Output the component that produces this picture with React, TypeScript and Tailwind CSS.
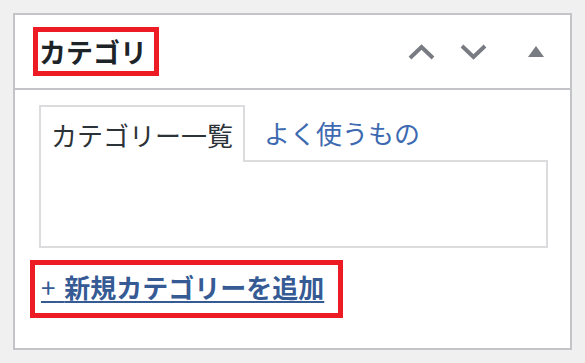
import React from 'react';

const jp = { fontFamily: '"Noto Sans CJK JP", "Noto Sans", sans-serif' };

const ChevronUp = () => (
  <svg width="27" height="16" viewBox="0 0 27 16">
    <path d="M2 14 L13.5 3 L25 14" fill="none" stroke="#787c82" strokeWidth="4" />
  </svg>
);

const ChevronDown = () => (
  <svg width="27" height="16" viewBox="0 0 27 16">
    <path d="M2 2 L13.5 13 L25 2" fill="none" stroke="#787c82" strokeWidth="4" />
  </svg>
);

const Triangle = () => (
  <svg width="16" height="11" viewBox="0 0 16 11">
    <polygon points="8,0 16,11 0,11" fill="#787c82" />
  </svg>
);

export default function App() {
  return (
    <div className="w-[585px] h-[363px] bg-[#f0f0f1] p-[13px]" style={jp}>
      <div className="h-[337px] border-2 border-[#c3c4c7] bg-white flex flex-col">
        <div className="h-[75px] border-b-2 border-[#c3c4c7] flex items-center pl-[18px] pr-[26px]">
          <div className="h-[49px] w-[126px] border-[5px] border-[#ed1c24] flex items-center pl-[1px]">
            <h2 className="text-[27px] font-bold text-[#1d2327] leading-none">カテゴリ</h2>
          </div>
          <div className="ml-auto flex items-center">
            <ChevronUp />
            <div className="ml-[25px]"><ChevronDown /></div>
            <div className="ml-[41px]"><Triangle /></div>
          </div>
        </div>

        <div className="pl-[24px] pt-[15px]">
          <div className="flex items-end">
            <div className="relative z-10 -mb-[2px] h-[57px] w-[206px] border-2 border-b-0 border-[#dcdcde] bg-white flex items-center pl-[10px]">
              <span className="text-[26px] text-[#2c3338] leading-none">カテゴリー一覧</span>
            </div>
            <div className="h-[55px] flex items-center pl-[19px]">
              <span className="text-[26px] text-[#3d6ab0] leading-none">よく使うもの</span>
            </div>
          </div>
          <div className="w-[509px] h-[88px] border-2 border-[#dcdcde]" />

          <div className="mt-[12px] -ml-[9px] w-[313px] h-[58px] border-[5px] border-[#ed1c24] flex items-center pl-[6px]">
            <a className="text-[26px] font-bold text-[#355a94] underline decoration-2 underline-offset-[3px] leading-none -mt-[4px]">
              <span className="font-normal tracking-[1.5px]">+{'\u00a0'}</span>新規カテゴリーを追加
            </a>
          </div>
        </div>
      </div>
    </div>
  );
}
